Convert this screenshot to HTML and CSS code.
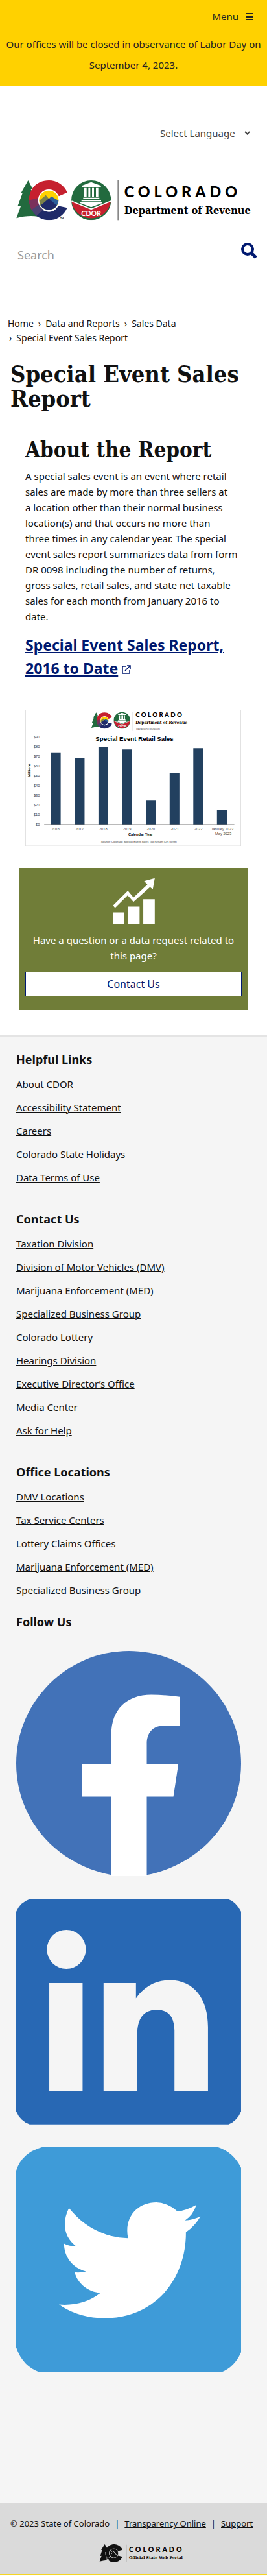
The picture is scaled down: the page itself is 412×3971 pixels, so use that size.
FILE: index.html
```html
<!DOCTYPE html>
<html lang="en">
<head>
<meta charset="utf-8">
<meta name="viewport" content="width=device-width, initial-scale=1">
<title>Special Event Sales Report | Department of Revenue</title>
<link rel="stylesheet" href="styles.css">
</head>
<body>
<svg class="defs" aria-hidden="true">
  <symbol id="emblem" viewBox="0 0 237 184">
    <path fill="#226a3e" d="M55 0 78 42 67 41 92 81 84 82 112 128 102 168Q56 160 1 175L22 117 7 119 29 59 21 61Z"/>
    <path fill="#c6202f" d="M236 56A92 92 0 0 0 151 0C92 0 59 44 59 92L59 100 70 130 105 92A47 47 0 0 1 194 74Z"/>
    <path fill="#1f2a69" d="M236 127A92 92 0 0 1 151 184C122 184 98 171 84 154L104 100A47 47 0 0 0 194 118Z"/>
    <path fill="#7b315b" d="M59 92Q61 122 73 140L114 110 105 80Z"/>
    <path fill="#4a4272" d="M71 136Q78 150 94 165L130 130 112 108Z"/>
    <circle cx="151" cy="92" r="50" fill="#fff"/>
    <circle cx="151" cy="92" r="45" fill="#ffd100"/>
    <path fill="#7c8249" d="M107 94 137 68 162 98 151 120 112 116Z"/>
    <path fill="#2d5f9a" d="M127 108 163 74 196 94A45 45 0 0 1 112 114Z"/>
    <path fill="#1f2a69" d="M113 116 151 84 188 116A45 45 0 0 1 113 116Z"/>
  </symbol>
  <symbol id="seal" viewBox="0 0 184 184">
    <circle cx="92" cy="92" r="92" fill="#226a3e"/>
    <path fill="#c6202f" d="M1 97 92 134 183 97A92 92 0 0 1 1 97Z"/>
    <path fill="none" stroke="#fff" stroke-width="5" d="M1 96 92 133 183 96"/>
    <path fill="#fff" d="M92 8 137 25V30H49V25ZM60 35H71V76H60ZM79 35H88V76H79ZM96 35H105V76H96ZM114 35H125V76H114ZM55 80H130V87H55ZM47 91H138V97H47ZM41 101H143V105L92 124 41 105Z"/>
  </symbol>
</svg>

<header>
  <div class="band">
    <div class="topbar">
      <button class="menu" type="button">Menu
        <svg width="12" height="11" viewBox="0 0 12 11" aria-hidden="true"><path fill="currentColor" d="M0 0H12V2H0ZM0 4H12V7H0ZM0 9H12V11H0Z"/></svg>
      </button>
    </div>
    <p class="alert">Our offices will be closed in observance of Labor Day on September 4, 2023.</p>
  </div>
  <div class="language">
    <select aria-label="Select Language"><option>Select Language</option></select>
    <svg width="9" height="6" viewBox="0 0 9 6" aria-hidden="true"><path fill="none" stroke="currentColor" stroke-width="2" d="M1 1 4.500 4.500 8 1"/></svg>
  </div>
  <a class="logo" href="#" aria-label="Colorado Department of Revenue">
    <svg viewBox="0 0 1089 185">
      <use href="#emblem" width="237" height="184"/>
      <use href="#seal" x="255" width="184" height="184"/>
      <text class="seal-text" x="347" y="165" text-anchor="middle">CDOR</text>
      <text class="tm" x="204" y="181">TM</text>
      <path fill="#888" d="M469 0h5v184h-5z"/>
      <text class="logo-name" x="500" y="78">COLORADO</text>
      <text class="logo-dept" x="500" y="157">Department of Revenue</text>
    </svg>
  </a>
  <form class="search" role="search">
    <input type="search" aria-label="Search" placeholder="Search">
    <button type="button" aria-label="Submit search">
      <svg width="25" height="25" viewBox="0 0 25 25" aria-hidden="true"><circle cx="10" cy="10" r="8" fill="none" stroke="currentColor" stroke-width="4"/><path stroke="currentColor" stroke-width="5" d="m15 15 8 8"/></svg>
    </button>
  </form>
</header>

<main>
  <nav class="crumbs" aria-label="Breadcrumb">
    <div><a href="#">Home</a><span>›</span><a href="#">Data and Reports</a><span>›</span><a href="#">Sales Data</a></div>
    <div><span>›</span>Special Event Sales Report</div>
  </nav>
  <h1>Special Event Sales Report</h1>
  <section class="about">
    <h2>About the Report</h2>
    <p>A special sales event is an event where retail sales are made by more than three sellers at a&nbsp;location other than their normal business location(s) and that occurs no more than three&nbsp;times in any calendar year. The special event sales report summarizes data from form DR&nbsp;0098 including the number of returns, gross&nbsp;sales, retail sales, and state net taxable sales for each month from January 2016 to date.</p>
    <h3><a href="#">Special Event Sales Report, 2016 to Date</a>
      <svg width="14" height="14" viewBox="0 0 14 14" aria-hidden="true"><path fill="none" stroke="currentColor" stroke-width="1.500" d="M6 2H1V13H12V8M5 9 13 1M8 1H13V6"/></svg></h3>
    <svg class="chart" viewBox="62 40 994 628" role="img" aria-label="Special Event Retail Sales by calendar year">
      <rect x="63" y="41" width="992" height="626" fill="#fff" stroke="#ddd" stroke-width="3"/>
      <use href="#emblem" x="366" y="51" width="96" height="78"/>
      <use href="#seal" x="469" y="51" width="77" height="77"/>
      <text class="chart-seal" x="508" y="120" text-anchor="middle">CDOR</text>
      <path fill="#888" d="M557 51h3v87h-3z"/>
      <text class="chart-name" x="570" y="73">COLORADO</text>
      <text class="chart-dept" x="570" y="106">Department of Revenue</text>
      <text class="chart-div" x="570" y="137">Taxation Division</text>
      <text class="chart-title" x="565" y="183" text-anchor="middle">Special Event Retail Sales</text>
      <g class="tick" text-anchor="end">
        <text x="129" y="170">$90</text><text x="129" y="215">$80</text><text x="129" y="260">$70</text><text x="129" y="305">$60</text><text x="129" y="350">$50</text><text x="129" y="395">$40</text><text x="129" y="440">$30</text><text x="129" y="485">$20</text><text x="129" y="530">$10</text><text x="129" y="575">$0</text>
      </g>
      <text class="axis" transform="translate(85 318) rotate(-90)" text-anchor="middle">Millions</text>
      <path fill="#22405f" d="M180 239h45v330h-45zM290 262h45v307h-45zM399 210h45v359h-45zM508 223h45v346h-45zM618 459h45v110h-45zM727 330h45v239h-45zM836 217h45v352h-45zM945 501h46v68h-46z"/>
      <path fill="#777" d="M149 567h876v4H149z"/>
      <g class="tick" text-anchor="middle">
        <text x="202" y="596">2016</text><text x="312" y="596">2017</text><text x="421" y="596">2018</text><text x="531" y="596">2019</text><text x="640" y="596">2020</text><text x="750" y="596">2021</text><text x="859" y="596">2022</text><text x="969" y="596">January 2023</text><text x="969" y="616">- May 2023</text>
      </g>
      <text class="axis" x="593" y="619" text-anchor="middle">Calendar Year</text>
      <text class="source" x="585" y="651" text-anchor="middle">Source: Colorado Special Event Sales Tax Return (DR 0098)</text>
    </svg>
  </section>
  <section class="contact">
    <svg width="66" height="72" viewBox="0 0 196 215" aria-hidden="true"><path fill="#fff" d="M3 160H56V213H3ZM73 133H126V213H73ZM143 99H196V213H143ZM196 2 187 53 174 43 98 111 71 81 13 139 4 128 72 60 98 91 162 31 147 16Z"/></svg>
    <p>Have a question or a data request related to this page?</p>
    <a class="contact-button" href="#">Contact Us</a>
  </section>
</main>

<footer>
  <div class="links">
    <h4>Helpful Links</h4>
    <ul>
      <li><a href="#">About CDOR</a></li>
      <li><a href="#">Accessibility Statement</a></li>
      <li><a href="#">Careers</a></li>
      <li><a href="#">Colorado State Holidays</a></li>
      <li><a href="#">Data Terms of Use</a></li>
    </ul>
    <h4>Contact Us</h4>
    <ul>
      <li><a href="#">Taxation Division</a></li>
      <li><a href="#">Division of Motor Vehicles (DMV)</a></li>
      <li><a href="#">Marijuana Enforcement (MED)</a></li>
      <li><a href="#">Specialized Business Group</a></li>
      <li><a href="#">Colorado Lottery</a></li>
      <li><a href="#">Hearings Division</a></li>
      <li><a href="#">Executive Director’s Office</a></li>
      <li><a href="#">Media Center</a></li>
      <li><a href="#">Ask for Help</a></li>
    </ul>
    <h4>Office Locations</h4>
    <ul>
      <li><a href="#">DMV Locations</a></li>
      <li><a href="#">Tax Service Centers</a></li>
      <li><a href="#">Lottery Claims Offices</a></li>
      <li><a href="#">Marijuana Enforcement (MED)</a></li>
      <li><a href="#">Specialized Business Group</a></li>
    </ul>
    <h4 class="follow">Follow Us</h4>
    <div class="social">
      <a href="#" aria-label="Facebook">
        <svg viewBox="76 135 1040 1040"><path fill="#4272b8" d="M516 1170C240 1115 76 895 76 655 76 370 310 135 598 135S1116 370 1116 655C1116 895 950 1115 680 1170Z"/><path fill="#fff" d="M516 1175V808H381V657H516V520C516 405 588 337 700 337Q770 338 832 347V480H765C705 480 680 515 680 565V657H826L803 808H680V1175Z"/></svg>
      </a>
      <a href="#" aria-label="LinkedIn">
        <svg viewBox="76 82 1040 1042"><path fill="#2868b4" d="M142 82H1052Q1092 94 1116 142V1064Q1098 1108 1058 1124H138Q94 1108 76 1064V142Q94 98 142 82Z"/><circle cx="308" cy="316" r="90" fill="#f5f5f5"/><path fill="#f5f5f5" d="M229 472H383V971H229ZM480 472H630V542C665 490 720 458 785 458 900 458 963 545 963 675V971H808V690C806 628 782 595 726 595 665 595 636 635 636 710V971H480Z"/></svg>
      </a>
      <a href="#" aria-label="Twitter">
        <svg viewBox="76 87 1040 1042"><path fill="#3e9bd8" d="M195 87H1010Q1080 110 1116 182V1034Q1085 1106 1018 1129H190Q106 1102 76 1012V195Q102 113 195 87Z"/><path fill="#fff" d="M320 368C390 455 485 505 593 507 573 405 642 342 724 342Q778 344 822 384 862 380 909 354 895 400 857 425 892 423 928 407 902 452 861 480C862 700 715 877 485 877 405 877 332 855 274 814 345 820 414 802 466 760 410 757 362 720 346 665Q372 668 400 661C336 645 298 594 297 532Q322 545 353 545C300 505 284 440 320 368Z"/></svg>
      </a>
    </div>
  </div>
  <div class="legal">
    <p><span>© 2023 State of Colorado</span><span>|</span><a href="#">Transparency Online</a><span>|</span><a href="#">Support</a></p>
    <a class="portal" href="#" aria-label="Colorado Official State Web Portal">
      <svg width="136" height="28" viewBox="0 0 406 84">
        <path fill="#111" d="M25 0 38 22 31 21 34 74Q18 76 1 80L10 53 4 54 13 26 8 27Z"/>
        <path fill="#111" d="M107 26A42 42 0 1 0 107 58L84 52A21 21 0 1 1 84 32Z"/>
        <circle cx="67" cy="42" r="21" fill="#111" stroke="#ddd" stroke-width="2"/>
        <path fill="none" stroke="#ddd" stroke-width="2" d="M50 52 66 34 84 54M55 37 63 29 80 50M34 72 57 50M28 36Q27 60 46 74"/>
        <path fill="#999" d="M123 2h3v80h-3z"/>
        <text class="portal-name" x="137" y="35">COLORADO</text>
        <text class="portal-sub" x="137" y="70">Official State Web Portal</text>
      </svg>
    </a>
  </div>
</footer>
</body>
</html>
```
FILE: styles.css
```css
* { box-sizing: border-box; }
body {
  margin: 0;
  background: #fff;
  color: #111;
  font: 15px/24px "Trebuchet MS", "Noto Sans", sans-serif;
}
h1, h2, h3, h4, p, ul { margin: 0; padding: 0; }
a { color: inherit; }
button, input, select {
  margin: 0;
  padding: 0;
  border: 0;
  background: none;
  color: inherit;
  font: inherit;
}
svg { display: block; }
.defs { display: none; }

.band { background: #ffd100; color: #222; }
.topbar { display: flex; justify-content: flex-end; height: 50px; padding-right: 21px; }
.menu { display: flex; align-items: center; gap: 11px; }
.alert { padding: 2px 4px 17px; line-height: 32px; text-align: center; }
.language {
  display: flex;
  justify-content: flex-end;
  align-items: center;
  gap: 14px;
  padding: 60px 26px 0;
  color: #444;
}
.language select { appearance: none; height: 24px; }
.logo { display: block; margin: 61px 24px 0 25px; }
.logo svg { width: 100%; overflow: visible; }
.seal-text { fill: #fff; font: bold 32px Lato, sans-serif; }
.tm { font: bold 10px Lato, sans-serif; }
.logo-name { font: 900 70px Lato, sans-serif; letter-spacing: 18px; }
.logo-dept { font: bold 49px "DejaVu Serif Condensed", "DejaVu Serif", serif; }
.search { display: flex; align-items: center; height: 40px; margin: 33px 15px 0 27px; }
.search input { flex: 1; min-width: 0; height: 40px; font-size: 18px; }
.search input::placeholder { color: #999; }
.search button { color: #001970; padding-bottom: 12px; }

.crumbs { margin: 75px 12px 0; font-size: 14px; line-height: 22px; }
.crumbs span { margin: 0 7px; }
.crumbs div + div span { margin-left: 2px; }
h1, h2 { font-family: "DejaVu Serif Condensed", "DejaVu Serif", serif; }
h1 { margin: 25px 16px 0; font-size: 36px; line-height: 38px; }
.about { margin: 43px 40px 0 39px; }
h2 { font-size: 33px; line-height: 36px; }
.about p { margin-top: 10px; }
h3 { margin-top: 14px; color: #001970; font-size: 23px; line-height: 36px; }
h3 svg { display: inline-block; }
.chart { width: 100%; margin-top: 46px; }
.chart-seal { fill: #fff; font: bold 13px Lato, sans-serif; }
.chart-name { font: 900 29px Lato, sans-serif; letter-spacing: 7px; }
.chart-dept { font: bold 20px "DejaVu Serif Condensed", "DejaVu Serif", serif; }
.chart-div { fill: #666; font: 15px "Liberation Sans", sans-serif; }
.chart-title { font: bold 29px "Liberation Sans", sans-serif; }
.tick { fill: #444; font: 17px "Liberation Sans", sans-serif; }
.axis { font: bold 17px "Liberation Sans", sans-serif; }
.source { fill: #444; font: 13px "Liberation Sans", sans-serif; }

.contact { margin: 34px 30px 39px; padding: 15px 9px 21px; background: #707d38; color: #fff; text-align: center; }
.contact svg { margin: 0 auto; }
.contact p { margin-top: 12px; }
.contact-button {
  display: block;
  margin-top: 13px;
  border: 1px solid #001970;
  background: #fff;
  color: #001970;
  font-size: 16px;
  line-height: 36px;
  text-decoration: none;
}

.links { padding: 23px 40px 201px 25px; border-top: 2px solid #e4e4e4; background: #f5f5f5; }
h4 { font-size: 18px; line-height: 24px; }
ul { margin: 8px 0 34px; list-style: none; }
li { line-height: 36px; }
.follow { margin-top: -15px; }
.social { display: grid; gap: 35px; margin-top: 33px; }
.legal {
  padding: 20px 16px 18px;
  border-top: 1px solid #c0c0c0;
  border-bottom: 1px solid #f5d524;
  background: #dadada;
}
.legal p { display: flex; gap: 8px; font-size: 13px; line-height: 22px; }
.portal { display: flex; justify-content: center; margin-top: 21px; padding-left: 29px; }
.portal-name { font: 900 32px Lato, sans-serif; letter-spacing: 9px; }
.portal-sub { font: bold 20px "DejaVu Serif Condensed", "DejaVu Serif", serif; }
```
